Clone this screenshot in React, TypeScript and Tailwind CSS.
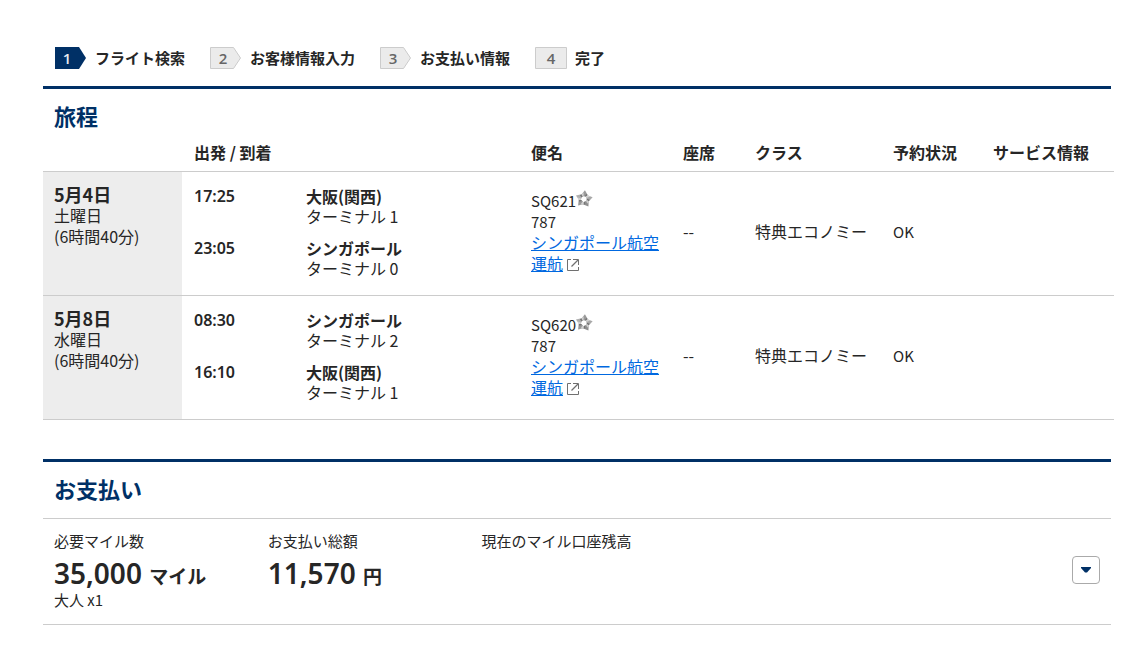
type Flight = {
  date: string;
  weekday: string;
  duration: string;
  stops: { time: string; city: string; terminal: string }[];
  flightNumber: string;
  aircraft: string;
  seat: string;
  cabin: string;
  status: string;
};

const steps = ["フライト検索", "お客様情報入力", "お支払い情報", "完了"];

const flights: Flight[] = [
  {
    date: "5月4日",
    weekday: "土曜日",
    duration: "(6時間40分)",
    stops: [
      { time: "17:25", city: "大阪(関西)", terminal: "ターミナル 1" },
      { time: "23:05", city: "シンガポール", terminal: "ターミナル 0" },
    ],
    flightNumber: "SQ621",
    aircraft: "787",
    seat: "--",
    cabin: "特典エコノミー",
    status: "OK",
  },
  {
    date: "5月8日",
    weekday: "水曜日",
    duration: "(6時間40分)",
    stops: [
      { time: "08:30", city: "シンガポール", terminal: "ターミナル 2" },
      { time: "16:10", city: "大阪(関西)", terminal: "ターミナル 1" },
    ],
    flightNumber: "SQ620",
    aircraft: "787",
    seat: "--",
    cabin: "特典エコノミー",
    status: "OK",
  },
];

function StepBadge({ index, total }: { index: number; total: number }) {
  const active = index === 0;
  const last = index === total - 1;
  return (
    <span className="grid h-[22px] w-8 shrink-0">
      <svg viewBox="0 0 32 22" className="col-start-1 row-start-1 h-[22px] w-8" aria-hidden="true">
        {active ? (
          <path d="M0 0H24L31 11L24 22H0Z" fill="#003066" />
        ) : last ? (
          <path d="M.5.5H31.5V21.5H.5Z" fill="#ebebeb" stroke="#ccc" />
        ) : (
          <path d="M.5.5H23.5L30.5 11L23.5 21.5H.5Z" fill="#ebebeb" stroke="#ccc" />
        )}
      </svg>
      <span
        className={
          "col-start-1 row-start-1 self-center text-center font-['Open_Sans',sans-serif] text-[15px] leading-5 font-semibold " +
          (active ? "pr-2 text-[#e6eaf0]" : last ? "text-[#666]" : "pr-[6px] text-[#666]")
        }
      >
        {index + 1}
      </span>
    </span>
  );
}

const petals = [
  { angle: 6, fill: "#9a9a9a" },
  { angle: 78, fill: "#a8a8a8" },
  { angle: 150, fill: "#8f8f8f" },
  { angle: 222, fill: "#989898" },
  { angle: 294, fill: "#b0b0b0" },
];

function AllianceIcon() {
  return (
    <svg viewBox="-9 -9 18 18" className="-ml-px inline-block size-[18px] align-[-1px]" role="img" aria-label="スターアライアンス">
      {petals.map(({ angle, fill }) => (
        <g key={angle} transform={`rotate(${angle})`}>
          <path d="M0 -8.8L3.2 -4.4L1.8 -2.6L-1.8 -2.6L-3 -4.2Z" fill={fill} />
          <path d="M-3 -4.2L-1.2 -6.6L-.6 -3.4L-1.8 -2.6Z" fill="#d2d2d2" />
          <path d="M3.2 -4.4L1.8 -2.6L.4 -2.6L1.6 -5.2Z" fill="#747474" />
        </g>
      ))}
    </svg>
  );
}

function ExternalIcon() {
  return (
    <svg viewBox="0 0 12 12" className="ml-1 inline-block size-3 align-[-1px]" fill="none" stroke="#707070" aria-hidden="true">
      <path d="M4 .5H.5V11.5H11.5V8M6 .5H11.5V6" />
      <path d="M11 1L4.5 7.5" strokeWidth="1.2" />
    </svg>
  );
}

function ItineraryRow({ flight }: { flight: Flight }) {
  return (
    <tr className="border-b border-[#ccc]">
      <th scope="row" className="bg-[#ededed] px-[11px] pt-[11px] text-left align-top font-normal">
        <span className="block text-lg leading-[22px] font-bold">{flight.date}</span>
        <span className="block">{flight.weekday}</span>
        <span className="block">{flight.duration}</span>
      </th>
      <td colSpan={2} className="px-3 pt-[14px] pb-[17px] align-top leading-5">
        <div className="flex flex-col gap-3">
          {flight.stops.map((stop) => (
            <div key={stop.time} className="flex">
              <span className="w-28 font-['Noto_Sans','Noto_Sans_CJK_JP',sans-serif] font-semibold">{stop.time}</span>
              <div>
                <p className="font-bold">{stop.city}</p>
                <p>{stop.terminal}</p>
              </div>
            </div>
          ))}
        </div>
      </td>
      <td className="px-3 pb-1">
        <p className="text-[15px]">
          {flight.flightNumber}
          <AllianceIcon />
        </p>
        <p className="text-[15px]">{flight.aircraft}</p>
        <p>
          <a href="#operator" className="text-[#0068e0] underline">
            シンガポール航空運航
          </a>
          <ExternalIcon />
        </p>
      </td>
      <td className="px-3 pb-1">{flight.seat}</td>
      <td className="px-3 pb-1 whitespace-nowrap">{flight.cabin}</td>
      <td className="px-3 pb-1 text-[15px]">{flight.status}</td>
      <td className="px-3 pb-1"></td>
    </tr>
  );
}

function Amount({ label, value, unit, note }: { label: string; value?: string; unit?: string; note?: string }) {
  return (
    <div className="w-[21%]">
      <dt className="text-[15px] leading-5 whitespace-nowrap">{label}</dt>
      {value && (
        <dd className="mt-1 font-['Noto_Sans','Noto_Sans_CJK_JP',sans-serif] text-[28px] leading-9 font-semibold">
          {value} <span className="text-[19px] leading-none font-bold">{unit}</span>
        </dd>
      )}
      {note && <dd className="text-[15px] leading-[18px]">{note}</dd>}
    </div>
  );
}

export default function App() {
  return (
    <main className="bg-white pt-[47px] pr-[35px] pb-[34px] pl-[43px] font-['Noto_Sans_CJK_JP',sans-serif] text-base leading-[21px] text-[#262626]">
      <ol className="flex gap-[25px] pl-3">
        {steps.map((label, i) => (
          <li key={label} className="flex items-center gap-2 text-[15px] leading-[22px] font-bold">
            <StepBadge index={i} total={steps.length} />
            {label}
          </li>
        ))}
      </ol>

      <section className="mt-[17px] border-t-[3px] border-[#003066]">
        <h2 className="px-[11px] pt-[10px] pb-[11px] text-[22px] leading-8 font-bold text-[#003066]">旅程</h2>
        <table className="w-[calc(100%+3px)] table-fixed border-collapse">
          <colgroup>
            <col className="w-[139px]" />
            <col className="w-28" />
            <col />
            <col className="w-[152px]" />
            <col className="w-[72px]" />
            <col className="w-[138px]" />
            <col className="w-[100px]" />
            <col className="w-[133px]" />
          </colgroup>
          <thead>
            <tr className="border-b border-[#ccc] text-left whitespace-nowrap">
              <td></td>
              <th scope="col" colSpan={2} className="px-3 pb-2">出発 / 到着</th>
              <th scope="col" className="px-3 pb-2">便名</th>
              <th scope="col" className="px-3 pb-2">座席</th>
              <th scope="col" className="px-3 pb-2">クラス</th>
              <th scope="col" className="px-3 pb-2">予約状況</th>
              <th scope="col" className="px-3 pb-2">サービス情報</th>
            </tr>
          </thead>
          <tbody>
            {flights.map((flight) => (
              <ItineraryRow key={flight.flightNumber} flight={flight} />
            ))}
          </tbody>
        </table>
      </section>

      <section className="mt-[39px] border-t-[3px] border-[#003066]">
        <h2 className="px-[11px] pt-[10px] pb-[14px] text-[22px] leading-8 font-bold text-[#003066]">お支払い</h2>
        <div className="flex items-center border-y border-[#ccc] px-[11px] pt-3 pb-[15px]">
          <dl className="flex flex-1">
            <Amount label="必要マイル数" value="35,000" unit="マイル" note="大人 x1" />
            <Amount label="お支払い総額" value="11,570" unit="円" />
            <Amount label="現在のマイル口座残高" />
          </dl>
          <button
            type="button"
            aria-label="詳細を表示"
            className="flex size-7 items-center justify-center rounded border border-[#aaa] bg-white"
          >
            <svg viewBox="0 0 10 6" className="h-[6px] w-[10px]" fill="#003066" aria-hidden="true">
              <path d="M0 0H10V1L6 5.5H4L0 1Z" />
            </svg>
          </button>
        </div>
      </section>
    </main>
  );
}
